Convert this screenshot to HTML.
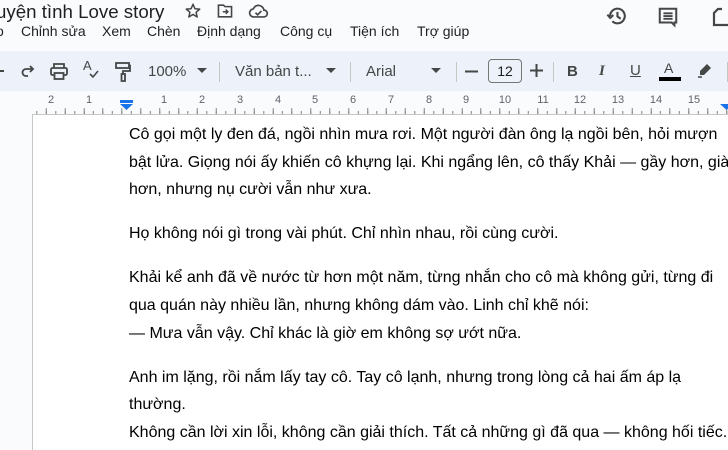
<!DOCTYPE html>
<html style="width:728px;height:450px;overflow:hidden"><head><meta charset="utf-8">
<style>
*{margin:0;padding:0;box-sizing:border-box}
body{width:728px;height:450px;overflow:hidden;background:#f9fbfd;font-family:"Liberation Sans",Arial,sans-serif;position:relative;color:#1f1f1f}
.abs{position:absolute;white-space:nowrap}
.title{left:-4px;top:1px;font-size:18.7px;color:#1f1f1f}
.menu{top:23px;font-size:14px;color:#1f1f1f}
.tb{position:absolute;left:0;top:51px;width:728px;height:40px;background:#edf2fa;border-radius:0}
.tt{font-size:15px;color:#444746;top:63px}
.sep{position:absolute;top:62px;width:1px;height:20px;background:#c7c7c7}
.ruler{position:absolute;left:32px;top:91px;width:696px;height:24px;background:#f9fbfd;border-bottom:1px solid #c4c7c5}
.ticks{position:absolute;left:32px;top:107px;width:696px;height:7px;
background-image:repeating-linear-gradient(90deg,#80868b 0 1px,transparent 1px 9.45px);background-position:4.3px 4px;background-size:100% 3px;background-repeat:repeat-x}
.ticks2{position:absolute;left:32px;top:104px;width:696px;height:10px;
background-image:repeating-linear-gradient(90deg,#80868b 0 1px,transparent 1px 18.9px);background-position:13.75px 4px;background-size:100% 6px;background-repeat:repeat-x}
.rn{position:absolute;top:94px;font-size:11px;color:#5f6368;transform:translateX(-50%)}
.page{position:absolute;left:32px;top:115px;width:696px;height:335px;background:#fff;border-left:1px solid #c4c7c5}
.txt{position:absolute;left:129px;top:121px;font-size:16px;line-height:27.6px;color:#000}
.txt p{white-space:nowrap;margin-bottom:16.5px}
svg{position:absolute}
</style></head><body>
<div class="abs title">uyện tình Love story</div>
<svg style="left:184px;top:2px" width="18" height="18" viewBox="0 0 24 24"><path d="M12 3l2.6 6 6.4.5-4.9 4.2 1.5 6.3L12 16.6 6.4 20l1.5-6.3L3 9.5l6.4-.5z" fill="none" stroke="#444746" stroke-width="2" stroke-linejoin="round"/></svg>
<svg style="left:216px;top:3px" width="18" height="16" viewBox="0 0 24 22"><path d="M3 3h7l2 2h9v14H3z" fill="none" stroke="#444746" stroke-width="2.2"/><path d="M9 12h7m-3-3l3 3-3 3" fill="none" stroke="#444746" stroke-width="2"/></svg>
<svg style="left:247px;top:2px" width="22" height="18" viewBox="0 0 26 20"><path d="M7 17h13a4 4 0 0 0 0-8 6.5 6.5 0 0 0-12.5-1.5A4.8 4.8 0 0 0 7 17z" fill="none" stroke="#444746" stroke-width="2"/><path d="M10 12l2.5 2.5 4.5-4.5" fill="none" stroke="#444746" stroke-width="2"/></svg>
<div class="abs menu" style="left:-4px">o</div>
<div class="abs menu" style="left:21px">Chỉnh sửa</div>
<div class="abs menu" style="left:102px">Xem</div>
<div class="abs menu" style="left:147px">Chèn</div>
<div class="abs menu" style="left:197px">Định dạng</div>
<div class="abs menu" style="left:280px">Công cụ</div>
<div class="abs menu" style="left:350px">Tiện ích</div>
<div class="abs menu" style="left:417px">Trợ giúp</div>
<svg style="left:606px;top:5px" width="22" height="22" viewBox="0 0 24 24"><path d="M4.5 12a8 8 0 1 1 2.4 5.7" fill="none" stroke="#444746" stroke-width="2.3"/><path d="M1.5 10.5l3 3.5 3.5-3" fill="none" stroke="#444746" stroke-width="2.3"/><path d="M12.5 7.5v5l3.5 2.5" fill="none" stroke="#444746" stroke-width="2.3"/></svg>
<svg style="left:657px;top:6px" width="22" height="22" viewBox="0 0 24 24"><path d="M3 3h18v15h-2v3l-3-3H3z" fill="none" stroke="#444746" stroke-width="2.2"/><path d="M7 8h10M7 11h10M7 14h10" stroke="#444746" stroke-width="2"/></svg>
<svg style="left:712px;top:7px" width="20" height="20" viewBox="0 0 20 20"><path d="M10 2H6L2 6v12h16" fill="none" stroke="#444746" stroke-width="2.2"/></svg>
<div class="tb"></div>
<svg style="left:-6px;top:64px" width="12" height="14" viewBox="0 0 12 14"><path d="M2 7h8" stroke="#444746" stroke-width="2"/></svg>
<svg style="left:20px;top:63px" width="16" height="16" viewBox="0 0 16 16"><path d="M13 6H6a3.5 3.5 0 0 0 0 7h2" fill="none" stroke="#444746" stroke-width="1.8"/><path d="M10 3l3 3-3 3" fill="none" stroke="#444746" stroke-width="1.8"/></svg>
<svg style="left:50px;top:63px" width="18" height="17" viewBox="0 0 18 17"><path d="M4 5V1h10v4" fill="none" stroke="#444746" stroke-width="1.8"/><rect x="1" y="5" width="16" height="7" rx="1.5" fill="none" stroke="#444746" stroke-width="1.8"/><rect x="4.5" y="10" width="9" height="6" fill="#edf2fa" stroke="#444746" stroke-width="1.8"/></svg>
<div class="abs" style="left:83px;top:58px;font-size:13px;color:#444746">A</div>
<svg style="left:89px;top:70px" width="10" height="9" viewBox="0 0 10 9"><path d="M1 4l3 3 5-6" fill="none" stroke="#444746" stroke-width="1.6"/></svg>
<svg style="left:115px;top:62px" width="16" height="20" viewBox="0 0 16 20"><rect x="1" y="1" width="13" height="5" fill="none" stroke="#444746" stroke-width="1.8"/><path d="M14 3.5h1V9H8v3" fill="none" stroke="#444746" stroke-width="1.8"/><rect x="6.5" y="12" width="3.5" height="7" fill="none" stroke="#444746" stroke-width="1.8"/></svg>
<div class="abs tt" style="left:148px">100%</div>
<svg style="left:197px;top:68px" width="10" height="6"><path d="M0 0h10L5 5z" fill="#444746"/></svg>
<div class="sep" style="left:219px"></div>
<div class="abs tt" style="left:235px">Văn bản t...</div>
<svg style="left:326px;top:68px" width="10" height="6"><path d="M0 0h10L5 5z" fill="#444746"/></svg>
<div class="sep" style="left:350px"></div>
<div class="abs tt" style="left:366px">Arial</div>
<svg style="left:431px;top:68px" width="10" height="6"><path d="M0 0h10L5 5z" fill="#444746"/></svg>
<div class="sep" style="left:456px"></div>
<svg style="left:465px;top:70px" width="13" height="3"><path d="M0 1.5h13" stroke="#444746" stroke-width="2"/></svg>
<div style="position:absolute;left:488px;top:59px;width:34px;height:24px;border:1px solid #747775;border-radius:4px;font-size:14px;color:#1f1f1f;text-align:center;line-height:22px">12</div>
<svg style="left:530px;top:64px" width="13" height="13"><path d="M0 6.5h13M6.5 0v13" stroke="#444746" stroke-width="2"/></svg>
<div class="sep" style="left:553px"></div>
<div class="abs" style="left:567px;top:63px;font-size:15px;font-weight:bold;color:#444746">B</div>
<div class="abs" style="left:599px;top:63px;font-size:15px;font-style:italic;font-family:'Liberation Serif',serif;font-weight:bold;color:#444746">I</div>
<div class="abs" style="left:630px;top:62px;font-size:15px;text-decoration:underline;color:#444746">U</div>
<div class="abs" style="left:664px;top:60px;font-size:14px;color:#444746">A</div>
<div style="position:absolute;left:659px;top:77px;width:22px;height:4px;background:#000"></div>
<svg style="left:697px;top:62px" width="16" height="16" viewBox="0 0 16 16"><path d="M10 2l4 4-7 7H3v-4z" fill="#444746"/><path d="M1 15h4" stroke="#444746" stroke-width="1.5"/></svg>
<div class="sep" style="left:727px"></div>
<div class="ruler"></div>
<div class="ticks"></div>
<div class="ticks2"></div>
<div class="rn" style="left:51px">2</div>
<div class="rn" style="left:89px">1</div>
<div class="rn" style="left:164px">1</div>
<div class="rn" style="left:202px">2</div>
<div class="rn" style="left:240px">3</div>
<div class="rn" style="left:278px">4</div>
<div class="rn" style="left:315px">5</div>
<div class="rn" style="left:353px">6</div>
<div class="rn" style="left:391px">7</div>
<div class="rn" style="left:429px">8</div>
<div class="rn" style="left:466px">9</div>
<div class="rn" style="left:505px">10</div>
<div class="rn" style="left:543px">11</div>
<div class="rn" style="left:580px">12</div>
<div class="rn" style="left:618px">13</div>
<div class="rn" style="left:656px">14</div>
<div class="rn" style="left:694px">15</div>
<svg style="left:120px;top:100px" width="14" height="14"><rect x="0" y="0" width="13" height="3" fill="#1a73e8"/><path d="M0 4h13l-6.5 6z" fill="#1a73e8"/></svg>
<svg style="left:720px;top:104px" width="10" height="10"><path d="M0 0h13l-6.5 6z" fill="#1a73e8"/></svg>
<div class="page"></div>
<div class="txt">
<p>Cô gọi một ly đen đá, ngồi nhìn mưa rơi. Một người đàn ông lạ ngồi bên, hỏi mượn<br>bật lửa. Giọng nói ấy khiến cô khựng lại. Khi ngẩng lên, cô thấy Khải — gầy hơn, già<br>hơn, nhưng nụ cười vẫn như xưa.</p>
<p>Họ không nói gì trong vài phút. Chỉ nhìn nhau, rồi cùng cười.</p>
<p>Khải kể anh đã về nước từ hơn một năm, từng nhắn cho cô mà không gửi, từng đi<br>qua quán này nhiều lần, nhưng không dám vào. Linh chỉ khẽ nói:<br>— Mưa vẫn vậy. Chỉ khác là giờ em không sợ ướt nữa.</p>
<p style="margin-bottom:0">Anh im lặng, rồi nắm lấy tay cô. Tay cô lạnh, nhưng trong lòng cả hai ấm áp lạ<br>thường.<br>Không cần lời xin lỗi, không cần giải thích. Tất cả những gì đã qua — không hối tiếc.</p>
</div>
</body></html>
